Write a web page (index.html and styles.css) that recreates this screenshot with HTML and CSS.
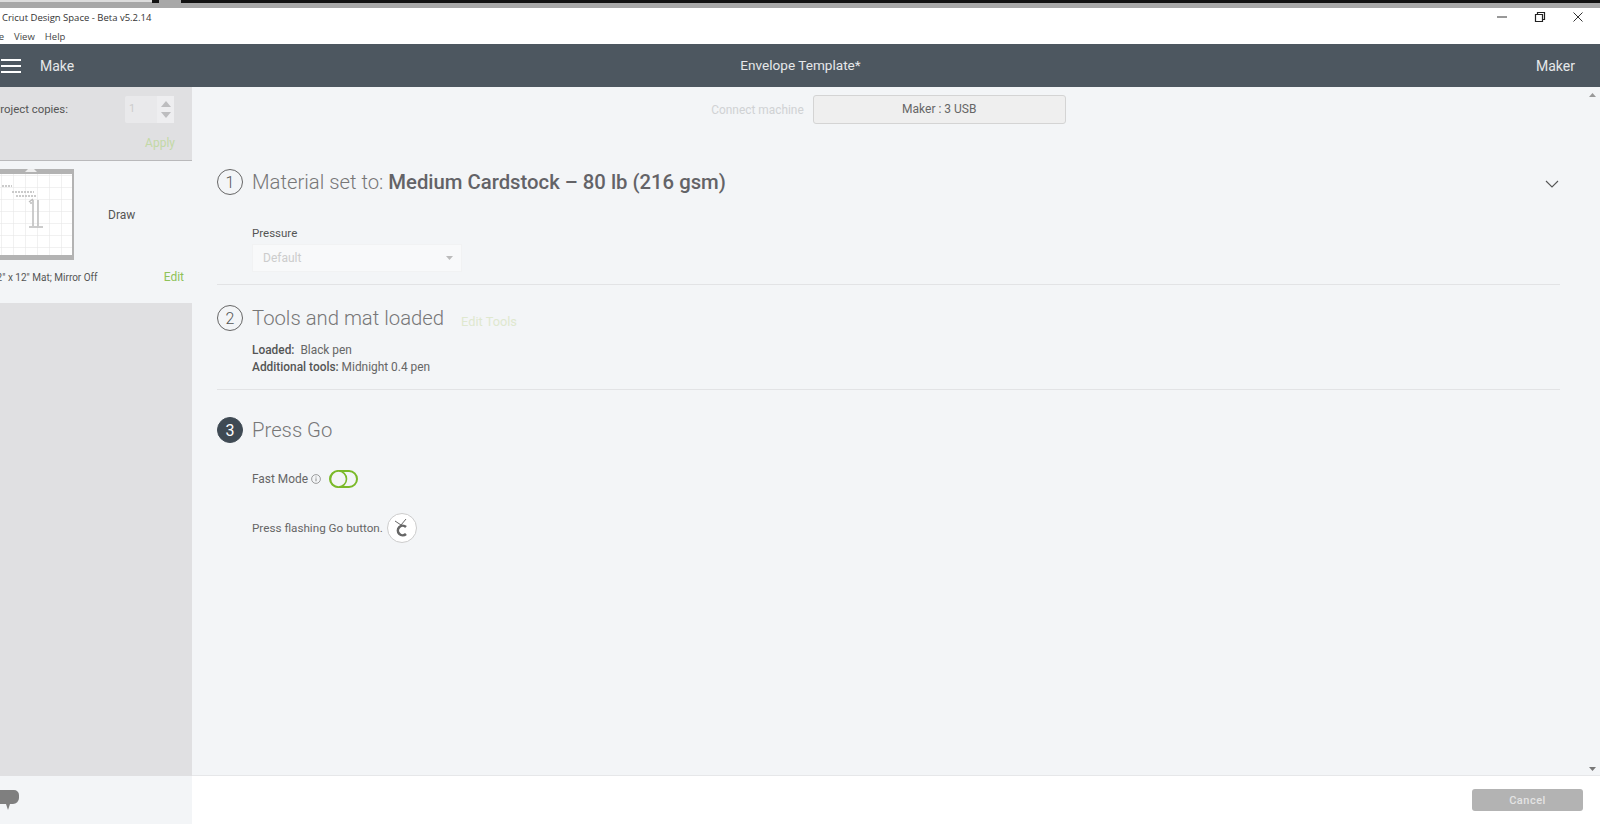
FILE: index.html
```html
<!DOCTYPE html>
<html lang="en">
<head>
    <meta charset="UTF-8">
    <title>Cricut Design Space - Beta v5.2.14</title>
    <link rel="stylesheet" href="styles.css">
</head>
<body>
    <div class="os-strip">
        <span class="seg seg-light"></span>
        <span class="seg seg-black-short"></span>
        <span class="seg seg-gap"></span>
        <span class="seg seg-black-long"></span>
    </div>
    <div class="title-bar">
        <span class="app-title">Cricut Design Space - Beta v5.2.14</span>
        <div class="window-buttons">
            <svg width="12" height="12" viewBox="0 0 12 12"><path d="M1 6h10" stroke="#333" fill="none"/></svg>
            <svg width="12" height="12" viewBox="0 0 12 12"><path d="M1.5 3.5h7v7h-7zM3.5 3.5v-2h7v7h-2" stroke="#222" stroke-width="1.2" fill="none"/></svg>
            <svg width="12" height="12" viewBox="0 0 12 12"><path d="M1.5 1.5l9 9M10.5 1.5l-9 9" stroke="#333" fill="none"/></svg>
        </div>
    </div>
    <div class="menu-bar">
        <span class="menu-file">File</span>
        <span>View</span>
        <span>Help</span>
    </div>
    <header class="app-header">
        <div class="header-left">
            <svg class="burger" width="22" height="16" viewBox="0 0 22 16"><path d="M1 2h20M1 8h20M1 14h20" stroke="#fff" stroke-width="1.8" fill="none"/></svg>
            <span>Make</span>
        </div>
        <div class="header-title">Envelope Template*</div>
        <div class="header-right">Maker</div>
    </header>

    <div class="workspace">
        <aside class="sidebar">
            <div class="copies">
                <div class="copies-row">
                    <span class="copies-label">Project copies:</span>
                    <div class="stepper">
                        <span class="stepper-value">1</span>
                        <span class="stepper-arrows">
                            <svg width="10" height="6" viewBox="0 0 10 6"><path d="M5 0l5 6H0z" fill="#bdbdbf"/></svg>
                            <svg width="10" height="6" viewBox="0 0 10 6"><path d="M0 0h10L5 6z" fill="#bdbdbf"/></svg>
                        </span>
                    </div>
                </div>
                <div class="apply">Apply</div>
            </div>
            <div class="mat-card">
                <div class="mat-row">
                    <svg class="mat" width="74" height="91" viewBox="0 0 74 91">
                        <defs>
                            <pattern id="mat-grid" x="1" y="6" width="12" height="12" patternUnits="userSpaceOnUse">
                                <path d="M12 0H0V12" stroke="#e4e4e4" stroke-width="1" fill="none"/>
                            </pattern>
                        </defs>
                        <rect width="74" height="91" fill="#b3b3b3"/>
                        <rect y="5" width="72" height="81" fill="#fff"/>
                        <rect y="5" width="72" height="81" fill="url(#mat-grid)"/>
                        <path d="M28 0h6l3 3H25z" fill="#eee"/>
                        <path d="M2 17h10M12 23h22M16 27h20" stroke="#bbb" stroke-width="1.5" stroke-dasharray="2 1" fill="none"/>
                        <path d="M29 33l4-3M31 33v2M33 31v26M38 31v26M29 58h14" stroke="#bcbcbc" stroke-width="1.5" fill="none"/>
                    </svg>
                    <span class="mat-mode">Draw</span>
                </div>
                <div class="mat-info">
                    <span class="mat-size">12" x 12" Mat; Mirror Off</span>
                    <span class="mat-edit">Edit</span>
                </div>
            </div>
            <div class="sidebar-fill"></div>
        </aside>

        <main class="main">
            <div class="content">
                <div class="connect-row">
                    <span class="connect-label">Connect machine</span>
                    <button class="machine-btn">Maker : 3 USB</button>
                </div>

                <section class="step step-material">
                    <div class="step-head">
                        <span class="step-num">1</span>
                        <h2>Material set to: <strong>Medium Cardstock – 80 lb (216 gsm)</strong></h2>
                        <svg class="chevron" width="14" height="8" viewBox="0 0 14 8"><path d="M1 1l6 6 6-6" stroke="#555" stroke-width="1.1" fill="none"/></svg>
                    </div>
                    <div class="step-body">
                        <div class="field-label">Pressure</div>
                        <div class="select">
                            <span>Default</span>
                            <svg width="7" height="4" viewBox="0 0 7 4"><path d="M0 0h7L3.5 4z" fill="#bbb"/></svg>
                        </div>
                    </div>
                </section>

                <section class="step step-tools">
                    <div class="step-head">
                        <span class="step-num">2</span>
                        <h2>Tools and mat loaded</h2>
                        <span class="edit-tools">Edit Tools</span>
                    </div>
                    <div class="step-body">
                        <div class="tool-line"><b>Loaded:</b>&nbsp; Black pen</div>
                        <div class="tool-line"><b>Additional tools:</b> Midnight 0.4 pen</div>
                    </div>
                </section>

                <section class="step step-go">
                    <div class="step-head">
                        <span class="step-num active">3</span>
                        <h2>Press Go</h2>
                    </div>
                    <div class="step-body">
                        <div class="fast-mode">
                            <span>Fast Mode</span>
                            <svg width="10" height="10" viewBox="0 0 10 10"><circle cx="5" cy="5" r="4.4" stroke="#777" stroke-width=".7" fill="none"/><path d="M5 4.3v3M5 2.5v1" stroke="#777" stroke-width=".8"/></svg>
                            <svg class="toggle" width="29" height="18" viewBox="0 0 29 18">
                                <rect x="1" y="1" width="27" height="16" rx="8" fill="none" stroke="#7ab929" stroke-width="2"/>
                                <circle cx="9.5" cy="9" r="8" fill="#f3f5f7" stroke="#7ab929" stroke-width="1.6"/>
                            </svg>
                        </div>
                        <div class="press-line">
                            <span>Press flashing Go button.</span>
                            <span class="go-btn">
                                <svg width="18" height="20" viewBox="0 0 18 20">
                                    <path d="M13 9a4.8 4.8 0 1 0 0 7" stroke="#666" stroke-width="2.6" fill="none"/>
                                    <path d="M2 3l6 4M8 7l5-6" stroke="#666" stroke-width="1" fill="none"/>
                                </svg>
                            </span>
                        </div>
                    </div>
                </section>
            </div>
            <div class="scrollbar">
                <svg width="7" height="4" viewBox="0 0 7 4"><path d="M3.5 0L7 4H0z" fill="#999"/></svg>
                <svg width="7" height="4" viewBox="0 0 7 4"><path d="M0 0h7L3.5 4z" fill="#777"/></svg>
            </div>
        </main>
    </div>

    <footer class="footer">
        <div class="footer-left">
            <svg width="20" height="22" viewBox="0 0 20 22"><path d="M0 1h14a5 5 0 0 1 5 5v3a6 6 0 0 1-6 6h-3l-2 6-2-6H0z" fill="#7f7f7f"/></svg>
        </div>
        <div class="footer-right">
            <button class="cancel-btn">Cancel</button>
        </div>
    </footer>
</body>
</html>
```

FILE: styles.css
```css
* {
    box-sizing: border-box;
}

html, body {
    margin: 0;
    height: 824px;
    overflow: hidden;
}

body {
    display: flex;
    flex-direction: column;
    font-family: Roboto, sans-serif;
    color: #555;
    background-color: #fff;
}

/* window chrome */
.os-strip {
    display: flex;
    flex: none;
    height: 8px;
    background-color: #a8a8a8;
}

.seg {
    height: 3px;
}

.seg-light {
    width: 152px;
    height: 2px;
    background-color: #ddd;
}

.seg-black-short {
    width: 7px;
    background-color: #111;
}

.seg-gap {
    width: 22px;
}

.seg-black-long {
    flex: 1;
    background-color: #111;
}

.title-bar {
    display: flex;
    flex: none;
    align-items: center;
    justify-content: space-between;
    height: 21px;
    padding: 0 16px 3px 2px;
    font-family: "Open Sans", sans-serif;
    font-size: 9.5px;
    color: #333;
}

.window-buttons {
    display: flex;
    gap: 26px;
}

.menu-bar {
    display: flex;
    flex: none;
    gap: 10px;
    align-items: center;
    height: 15px;
    padding-left: 12px;
    font-family: "Open Sans", sans-serif;
    font-size: 9.5px;
    color: #444;
}

.menu-file {
    margin-left: -23px;
}

.app-header {
    display: grid;
    flex: none;
    grid-template-columns: 1fr auto 1fr;
    align-items: center;
    height: 43px;
    background-color: #4d5760;
    font-size: 14px;
    color: #e6e8ea;
}

.header-left {
    display: flex;
    align-items: center;
    gap: 18px;
}

.header-title {
    padding-bottom: 2px;
    font-size: 13.6px;
    margin-left: 1px;
}

.header-right {
    text-align: right;
    padding-right: 25px;
}

/* main area */
.workspace {
    display: flex;
    flex: 1;
    min-height: 0;
}

.sidebar {
    display: flex;
    flex: none;
    flex-direction: column;
    width: 192px;
    overflow: hidden;
    background-color: #e0e0e2;
}

.copies {
    height: 74px;
    padding: 9px 18px 0 0;
    border-bottom: 1px solid #b9b9bb;
}

.copies-row {
    display: flex;
    align-items: center;
    justify-content: space-between;
    height: 27px;
}

.copies-label {
    margin: 0 0 2px -7px;
    font-size: 11.4px;
    color: #555;
}

.stepper {
    display: flex;
    width: 49px;
    height: 27px;
    background-color: #e9e9eb;
    border-radius: 2px;
}

.stepper-value {
    flex: 1;
    padding: 6px 0 0 4px;
    font-size: 11px;
    color: #ccc;
}

.stepper-arrows {
    display: flex;
    flex-direction: column;
    align-items: center;
    justify-content: center;
    gap: 5px;
    width: 17px;
    background-color: #eeeef0;
}

.stepper-arrows svg {
    display: block;
}

.apply {
    margin: 13px -1px 0 0;
    text-align: right;
    font-size: 12px;
    color: #c3d9a6;
}

.mat-card {
    flex: none;
    height: 142px;
    padding-top: 8px;
    background-color: #f3f5f7;
}

.mat-row {
    display: flex;
    align-items: center;
    height: 91px;
}

.mat {
    display: block;
    flex: none;
}

.mat-mode {
    margin: 0 0 0 34px;
    font-size: 12px;
    color: #555;
}

.mat-info {
    display: flex;
    align-items: center;
    justify-content: space-between;
    margin-top: 10px;
    padding-right: 8px;
}

.mat-size {
    margin-left: -9px;
    font-size: 10px;
    color: #555;
}

.mat-edit {
    font-size: 12px;
    color: #8fc259;
}

.sidebar-fill {
    flex: 1;
}

.main {
    display: flex;
    flex: 1;
    min-width: 0;
    background-color: #f3f5f7;
    border-bottom: 1px solid #e6e7e9;
}

.content {
    flex: 1;
    padding: 8px 24px 0 25px;
}

.connect-row {
    display: flex;
    align-items: center;
    justify-content: center;
    gap: 9px;
    height: 29px;
}

.connect-label {
    font-size: 11.9px;
    color: #d0d2d4;
}

.machine-btn {
    width: 253px;
    height: 29px;
    padding: 0 0 2px;
    background-color: #efefef;
    border: 1px solid #d4d4d4;
    border-radius: 3px;
    font-family: Roboto, sans-serif;
    font-size: 12px;
    color: #666;
}

.step-head {
    display: flex;
    align-items: center;
    height: 26px;
}

.step-num {
    display: flex;
    flex: none;
    align-items: center;
    justify-content: center;
    width: 26px;
    height: 26px;
    margin-right: 9px;
    border: 1px solid #666;
    border-radius: 50%;
    font-size: 16px;
    font-weight: 300;
    color: #555;
}

.step-num.active {
    background-color: #3f4a54;
    border-color: #3f4a54;
    font-weight: 400;
    color: #fff;
}

h2 {
    margin: 0;
    font-size: 20.3px;
    font-weight: 300;
    color: #777;
}

h2 strong {
    font-weight: 500;
    color: #636367;
}

.step-body {
    padding-left: 35px;
}

.step {
    border-bottom: 1px solid #e2e3e5;
}

.step-go {
    border-bottom: none;
}

.step-material {
    height: 116px;
    margin-top: 45px;
}

.step-material .step-body {
    padding-top: 31px;
}

.chevron {
    margin: 4px 1px 0 auto;
}

.field-label {
    font-size: 11.5px;
    color: #555;
}

.select {
    display: flex;
    align-items: center;
    justify-content: space-between;
    width: 210px;
    height: 28px;
    margin-top: 4px;
    padding: 0 8px 0 10px;
    background-color: #f8f9fa;
    border: 1px solid #f1f2f3;
    font-size: 12px;
    color: #ccc;
}

.step-tools {
    height: 105px;
    padding-top: 20px;
}

.edit-tools {
    margin: 6px 0 0 17px;
    font-size: 12.8px;
    color: #dfe8cf;
}

.step-tools .step-body {
    padding-top: 11px;
}

.tool-line {
    height: 17px;
    font-size: 11.9px;
    line-height: 17px;
    color: #666;
}

.tool-line b {
    font-weight: 500;
    color: #555;
}

.step-go {
    padding-top: 27px;
}

.fast-mode {
    display: flex;
    align-items: center;
    gap: 3px;
    margin-top: 27px;
    height: 18px;
    font-size: 11.9px;
    color: #666;
}

.toggle {
    margin-left: 5px;
}

.press-line {
    display: flex;
    align-items: center;
    gap: 4px;
    margin-top: 25px;
    font-size: 11.7px;
    color: #666;
}

.go-btn {
    display: flex;
    align-items: center;
    justify-content: center;
    width: 30px;
    height: 30px;
    background-color: #fff;
    border: 1px solid #ccc;
    border-radius: 50%;
}

.scrollbar {
    display: flex;
    flex: none;
    flex-direction: column;
    justify-content: space-between;
    align-items: center;
    width: 16px;
    padding: 6px 0 4px;
}

.scrollbar svg {
    display: block;
}

.footer {
    display: flex;
    flex: none;
    height: 48px;
}

.footer-left {
    display: flex;
    align-items: center;
    width: 192px;
    background-color: #f3f5f7;
}

.footer-right {
    display: flex;
    flex: 1;
    align-items: center;
    justify-content: flex-end;
    padding-right: 17px;
}

.cancel-btn {
    width: 111px;
    height: 22px;
    padding: 0;
    background-color: #b3b3b3;
    border: none;
    border-radius: 3px;
    font-family: Roboto, sans-serif;
    font-size: 11px;
    font-weight: 500;
    letter-spacing: .5px;
    color: #e4e4e4;
}
```
